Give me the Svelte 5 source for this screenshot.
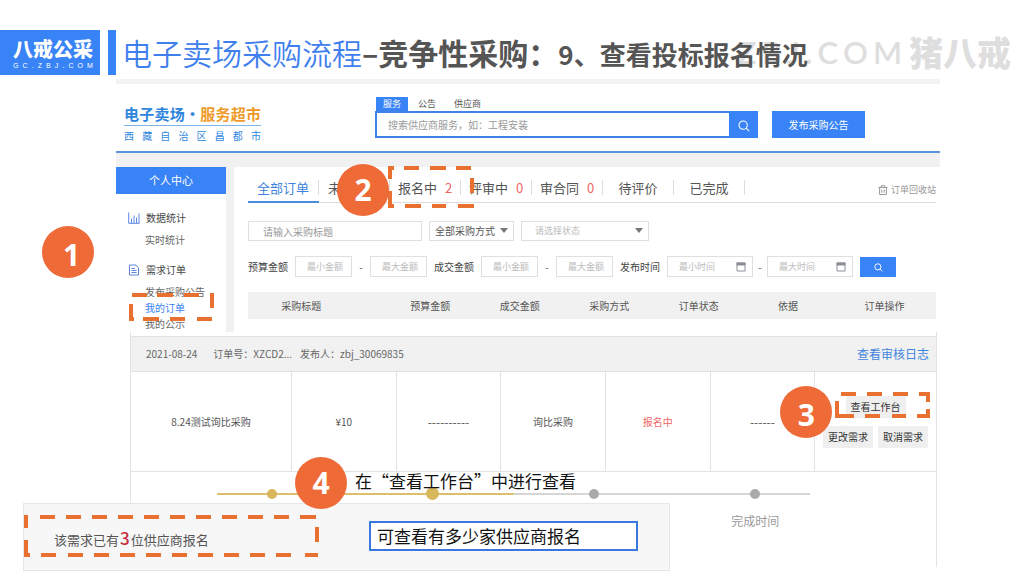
<script>
  const tabs = [
    { name: '全部订单', active: true },
    { name: '未', start: true },
    { name: '报名中', count: 2, marked: true },
    { name: '评审中', count: 0 },
    { name: '审合同', count: 0 },
    { name: '待评价' },
    { name: '已完成' }
  ];
  const columns = ['采购标题', '预算金额', '成交金额', '采购方式', '订单状态', '依据', '订单操作'];
  const steps = [
    { done: true },
    { done: true, current: true },
    {},
    { label: '完成时间' }
  ];
</script>

{#snippet lens()}
  <svg class="lens" viewBox="0 0 14 14" aria-hidden="true">
    <circle cx="6" cy="6" r="4.8" /><path d="M9.5 9.5 13 13" />
  </svg>
{/snippet}

{#snippet marks(cls, d)}
  <svg class="marks {cls}" aria-hidden="true"><path {d} /></svg>
{/snippet}

{#snippet amounts(id, label)}
  <label class="name" for="{id}-min">{label}</label>
  <div class="range">
    <input id="{id}-min" class="field amount" placeholder="最小金额" />
    <span class="dash">-</span>
    <input class="field amount" placeholder="最大金额" aria-label="{label}上限" />
  </div>
{/snippet}

{#snippet date(id, hint)}
  <span class="field date">
    <input {id} placeholder={hint} aria-label={hint} />
    <svg viewBox="0 0 10 10" aria-hidden="true"><path d="M1 1h8v8H1z" /><path class="top" d="M.5 2h9" /></svg>
  </span>
{/snippet}

<div class="slide" lang="zh-CN">
  <header class="heading">
    <div class="logo">
      <strong>八戒公采</strong>
      <span class="spread">{#each 'GC.ZBJ.COM' as c}<span>{c}</span>{/each}</span>
    </div>
    <span class="bar"></span>
    <h1><span class="light">电子卖场采购流程</span>–竞争性采购：<small>9、查看投标报名情况</small></h1>
    <div class="watermark" aria-hidden="true">
      <span class="domain">{#each 'ZBJ.COM' as c}<span>{c}</span>{/each}</span>
      <strong>猪八戒</strong>
    </div>
  </header>

  <section class="site">
    <div class="masthead">
      <div class="brand">
        <div class="market">电子卖场·<em>服务超市</em></div>
        <div class="region">西藏自治区昌都市</div>
      </div>
      <form class="search">
        <div class="kinds">
          <button type="button" class="on">服务</button>
          <button type="button">公告</button>
          <button type="button">供应商</button>
        </div>
        <div class="query">
          <input aria-label="搜索" placeholder="搜索供应商服务，如：工程安装" />
          <button type="button" aria-label="搜索">{@render lens()}</button>
        </div>
      </form>
      <button class="publish">发布采购公告</button>
    </div>

    <div class="workspace">
      <nav class="side">
        <h2>个人中心</h2>
        <h3>
          <svg viewBox="0 0 12 12" aria-hidden="true"><path d="M.7.5v10.8h10.8M3.5 11V6.500M6 11V3.500M8.500 11V5.500M11 11V1.500" /></svg>
          数据统计
        </h3>
        <a class="roomy" href="#stats">实时统计</a>
        <h3 class="second">
          <svg viewBox="0 0 12 12" aria-hidden="true"><path d="M1.500 1h6.500l2.500 2.800V11h-9zM3.500 4.500h3.500M3.500 6.500h5M3.500 8.500h5" /></svg>
          需求订单
        </h3>
        <a href="#publish">发布采购公告</a>
        <a class="current" href="#orders">
          我的订单
          {@render marks('m1', 'M4 4h15M29 4h16M56 4h15M84 2v15M3 13v15M1 28h5M15 28h16M42 28h15M69 28h15')}
        </a>
        <a href="#notices">我的公示</a>
      </nav>

      <main>
        <div class="tabs">
          {#each tabs as t}
            <div class="tab" class:active={t.active} class:start={t.start}>
              <a href="#tab">{t.name}{#if t.count !== undefined}<b>{t.count}</b>{/if}</a>
              {#if t.marked}
                {@render marks('m2', 'M2 4h6M4 2v13M18 4h15M44 4h16M70 4h15M86 14v15M4 27v16M2 42h6M19 42h16M46 42h14M72 42h16')}
                <span class="badge b2">2</span>
              {/if}
            </div>
          {/each}
          <a class="bin" href="#bin">
            <svg viewBox="0 0 10 10" aria-hidden="true"><path d="M.5 2.500h9M3.200 2.300V.7h3.600v1.600M1.600 2.700v6.800h6.800V2.700M3.800 4.500v3.200M6.200 4.500v3.200" /></svg>
            订单回收站
          </a>
        </div>

        <form class="filters">
          <div class="row">
            <input class="field title" aria-label="采购标题" placeholder="请输入采购标题" />
            <span class="field drop method">
              <select aria-label="采购方式"><option>全部采购方式</option></select>
            </span>
            <span class="field drop status">
              <select aria-label="订单状态"><option>请选择状态</option></select>
            </span>
          </div>
          <div class="row second">
            {@render amounts('budget', '预算金额')}
            {@render amounts('deal', '成交金额')}
            <label class="name" for="from">发布时间</label>
            <div class="range dates">
              {@render date('from', '最小时间')}
              <span class="dash">-</span>
              {@render date('to', '最大时间')}
            </div>
            <button class="go" type="button" aria-label="查询">{@render lens()}</button>
          </div>
        </form>

        <table class="columns">
          <thead><tr>{#each columns as c}<th scope="col">{c}</th>{/each}</tr></thead>
        </table>
      </main>
    </div>

    <article class="record">
      <div class="meta">
        <span class="day">2021-08-24</span>
        <span class="number">订单号：XZCD2...</span>
        <span>发布人：zbj_30069835</span>
        <a href="#log">查看审核日志</a>
      </div>
      <table class="order">
        <tbody>
          <tr>
            <td>8.24测试询比采购</td>
            <td>¥10</td>
            <td class="blank">----------</td>
            <td>询比采购</td>
            <td class="red">报名中</td>
            <td class="blank">------</td>
            <td class="ops">
              <button>查看工作台</button>
              <div><button>更改需求</button><button>取消需求</button></div>
              {@render marks('m3', 'M7 4h15M33 4h15M59 4h15M85 4h11M94 4v8M94 19v9M83 26h13M58 26h14M31 26h15M5 26h15M3 11v17')}
              <span class="badge b3">3</span>
            </td>
          </tr>
        </tbody>
      </table>
      <div class="progress">
        <ol>
          {#each steps as s}
            <li>
              <span class="dot" class:done={s.done} class:big={s.current}></span>
              {#if s.label}<span>{s.label}</span>{/if}
            </li>
          {/each}
        </ol>
        <span class="badge b4">4</span>
        <p>在“查看工作台”中进行查看</p>
      </div>
    </article>
  </section>

  <span class="badge b1">1</span>

  <aside class="panel">
    <p>该需求已有<b>3</b>位供应商报名</p>
    <div class="note">可查看有多少家供应商报名</div>
    {@render marks('m4', 'M1 4h4M3 2v13M17 4h15M43 4h15M69 4h15M95 4h15M121 4h15M147 4h15M173 4h15M199 4h15M225 4h15M251 4h15M277 4h15M285 4h8M294 14v15M3 27v15M1 42h6M18 42h15M45 42h15M71 42h15M97 42h15M123 42h15M149 42h15M175 42h15M201 42h15M227 42h15M253 42h15M282 42h13')}
  </aside>
</div>

<style>
  :global(body) { margin: 0; background: #fff; }
  .slide {
    position: relative;
    overflow: hidden;
    padding: 30px 0 8px;
    color: #555;
    font: 10px/16px "Noto Sans CJK SC", "Noto Sans", sans-serif;
  }
  .slide :is(input, select, button) {
    box-sizing: border-box;
    margin: 0;
    padding: 0;
    border: 0;
    border-radius: 0;
    background: none;
    color: inherit;
    font: inherit;
    min-width: 0;
  }
  input::placeholder { color: #999; opacity: 1; }
  a { color: inherit; text-decoration: none; }
  h1, h2, h3, p, ol { margin: 0; padding: 0; font-weight: 400; list-style: none; }
  svg { fill: none; flex: none; }

  .heading { position: relative; display: flex; height: 45px; }
  .logo {
    box-sizing: border-box;
    width: 100px;
    padding: 6px 7px 0 13px;
    background: #3883f6;
    color: #fff;
  }
  .logo strong { display: block; font-size: 20px; line-height: 26px; font-weight: 900; }
  .spread { display: flex; justify-content: space-between; font: 7px/8px "Liberation Sans", sans-serif; }
  .bar { width: 8px; margin: 0 6px 0 8px; background: #3883f6; }
  h1 {
    position: relative;
    z-index: 1;
    color: #555;
    font-size: 30px;
    line-height: 44px;
    font-weight: 700;
    white-space: nowrap;
  }
  h1 .light { color: #3f80ee; font-weight: 350; }
  h1 small { font-size: 26px; }
  .watermark {
    position: absolute;
    top: 0;
    right: 13px;
    display: flex;
    align-items: center;
    gap: 7px;
    height: 44px;
    color: #dedede;
  }
  .domain { display: flex; gap: 5px; font: 600 31px/44px Lato, sans-serif; }
  .watermark strong { font-size: 34px; font-weight: 900; }

  .site { margin: 4px 84px 0 116px; border-top: 5px solid #f3f3f3; }
  .masthead {
    display: flex;
    align-items: flex-end;
    height: 54px;
    padding: 0 75px 13px 8px;
    border-bottom: 2px solid #5b95db;
  }
  .brand { width: 137px; align-self: flex-start; padding-top: 20px; color: #2f86dd; }
  .market {
    padding-bottom: 2px;
    border-bottom: 1px solid #7db4ea;
    font-size: 15px;
    line-height: 19px;
    font-weight: 700;
    text-align-last: justify;
    white-space: nowrap;
  }
  .market em { color: #ee9a28; font-style: normal; }
  .region { padding-top: 3px; line-height: 14px; text-align-last: justify; }
  .search { flex: 1; margin-left: 114px; }
  .kinds { display: flex; padding-left: 1px; font-size: 9px; line-height: 14px; }
  .kinds button { padding: 0 9px; }
  .kinds .on { padding: 0 7px; margin-right: 1px; background: #3883f6; color: #fff; }
  .query { display: flex; height: 27px; }
  .query input { flex: 1; padding: 0 11px; border: 2px solid #3f83e6; border-right: 0; }
  .query button { width: 29px; background: #3883f6; }
  .lens { width: 12px; height: 12px; vertical-align: middle; stroke: #fff; stroke-width: 1.2; }
  .masthead .publish { width: 93px; height: 27px; margin-left: 14px; background: #3883f6; color: #fff; }

  .workspace {
    display: grid;
    grid-template-columns: 110px 1fr;
    gap: 8px;
    border-top: 14px solid #f1f1f1;
    background: linear-gradient(#f1f1f1, #f1f1f1) 110px 0 / 8px 100% no-repeat;
  }
  .side h2 {
    margin-bottom: 14px;
    background: #3883f6;
    color: #fff;
    font-size: 11px;
    line-height: 27px;
    text-align: center;
  }
  .side h3 { display: flex; align-items: center; gap: 6px; padding-left: 12px; color: #444; font-size: 10px; line-height: 20px; }
  .side h3 svg { width: 12px; height: 12px; stroke: #5c86e0; stroke-width: 1; }
  .side h3.second { margin: 8px 0 4px; }
  .side a { position: relative; display: block; padding-left: 29px; color: #666; }
  .side a.roomy { line-height: 24px; }
  .side a.current { color: #3883f6; }

  main { min-width: 0; padding: 0 4px 11px 14px; background: #fff; }
  .tabs { display: flex; height: 35px; border-bottom: 1px solid #dcdcdc; font-size: 13px; white-space: nowrap; }
  .tab { position: relative; flex: 0 0 71px; }
  .tab > a {
    display: flex;
    justify-content: center;
    gap: 8px;
    box-sizing: border-box;
    height: 15px;
    margin-top: 13px;
    border-right: 1px solid #ddd;
    line-height: 15px;
  }
  .tab.start > a { justify-content: flex-start; padding-left: 9px; }
  .tab b { color: #ee6464; font-weight: 400; }
  .tab.active { height: 34px; border-bottom: 2px solid #4a8bdb; color: #3f83dc; }
  .bin { display: flex; align-items: center; gap: 3px; margin: 10px 0 0 auto; color: #999; font-size: 9px; }
  .bin svg { width: 10px; height: 10px; stroke: #999; stroke-width: 1; }

  .row { display: flex; align-items: center; gap: 7px; margin-top: 18px; }
  .row.second { margin: 15px 0; }
  .slide .field { box-sizing: border-box; border: 1px solid #dfdfdf; }
  .slide .title { width: 174px; height: 20px; padding-left: 14px; }
  .drop { position: relative; height: 20px; }
  .drop select { width: 100%; height: 100%; padding-left: 5px; appearance: none; }
  .drop::after {
    content: "";
    position: absolute;
    top: 6px;
    right: 5px;
    border: 4px solid transparent;
    border-top: 5px solid #777;
    border-bottom: 0;
    pointer-events: none;
  }
  .method { width: 85px; }
  .status { width: 128px; }
  .slide .status select { padding-left: 13px; color: #bbb; font-size: 9px; }
  .name { flex: none; color: #444; }
  .range { display: flex; align-items: center; }
  .dash { width: 18px; text-align: center; }
  .dates .dash { width: 14px; }
  .slide .amount { width: 57px; height: 21px; padding-left: 11px; font-size: 9px; }
  .date { display: flex; align-items: center; width: 86px; height: 21px; padding: 0 6px 0 11px; font-size: 9px; }
  .date input { flex: 1; width: 0; }
  .amount::placeholder, .date input::placeholder { color: #bbb; }
  .date svg { width: 10px; height: 10px; stroke: #8a8f98; stroke-width: 1; }
  .date svg .top { stroke-width: 3; }
  .slide .go { width: 36px; height: 20px; background: #3883f6; line-height: 10px; }
  .go .lens { width: 9px; height: 9px; stroke-width: 1.500; }

  table { width: 100%; border-spacing: 0; table-layout: fixed; }
  .columns { background: #f1f1f1; }
  .columns th { width: 13%; height: 27px; padding: 0; font-weight: 400; }
  .columns th:first-child { width: 15.500%; padding-right: 31px; }
  .columns th:last-child { width: 15%; }

  .record { margin: 0 3px 0 14px; padding-top: 4px; border: solid #e2e2e2; border-width: 0 1px; }
  .meta {
    display: flex;
    align-items: center;
    height: 34px;
    padding: 0 7px 0 15px;
    border: solid #e0e0e0;
    border-width: 1px 0;
    background: #f1f1f1;
    color: #666;
  }
  .day { margin-right: 16px; }
  .number { margin-right: 8px; }
  .meta a { margin-left: auto; color: #4384dd; font-size: 12px; }
  .order td {
    width: 13%;
    height: 100px;
    box-sizing: border-box;
    padding: 0;
    border: solid #e2e2e2;
    border-width: 0 1px 1px 0;
    text-align: center;
  }
  .order td:first-child { width: 20%; }
  .order td:last-child { position: relative; width: 15%; border-right: 0; }
  .order .red { color: #e66; }
  .order .blank { font-size: 12px; }
  .ops button { height: 22px; padding: 0 5px; background: #efefef; color: #333; }
  .ops div { display: flex; justify-content: center; gap: 5px; margin-top: 8px; }

  .progress { position: relative; min-height: 95px; }
  .progress ol {
    display: grid;
    grid-template-columns: repeat(4, 1fr);
    margin: 0 100px 0 60px;
    padding-top: 14px;
    background: linear-gradient(90deg, #dcbf68 50%, #d5d5d5 50%) 50% 21px / 92% 2px no-repeat;
    color: #999;
    font-size: 12px;
    text-align: center;
  }
  .progress li { display: grid; grid-template-rows: 15px auto; gap: 12px; place-items: center; }
  .dot { width: 10px; height: 10px; border-radius: 50%; background: #aaa; }
  .dot.done { background: #d7b65c; }
  .dot.big { width: 13px; height: 13px; }
  .progress p { position: absolute; top: -4px; left: 224px; color: #111; font-size: 17px; line-height: 25px; white-space: nowrap; }

  .panel {
    position: absolute;
    left: 23px;
    bottom: 4px;
    display: flex;
    align-items: center;
    box-sizing: border-box;
    width: 647px;
    height: 68px;
    padding-left: 30px;
    border: 1px solid #e6e6e6;
    background: #f7f7f7;
  }
  .panel p { flex: 1; padding-top: 4px; font-size: 13px; line-height: 20px; }
  .panel b { margin: 0 1px; color: #c3303c; font-size: 17px; font-weight: 500; }
  .note {
    box-sizing: border-box;
    width: 269px;
    margin: 0 31px 2px 0;
    padding-left: 6px;
    border: 2px solid #3b76e0;
    background: #fff;
    color: #111;
    font-size: 17px;
    line-height: 26px;
  }

  .badge {
    position: absolute;
    z-index: 3;
    width: 52px;
    height: 52px;
    border-radius: 50%;
    background: #ee6a37;
    color: #fff;
    font: 700 30px/52px "Open Sans", sans-serif;
    text-align: center;
  }
  .b1 { top: 226px; left: 42px; box-sizing: border-box; padding: 3px 0 0 7px; }
  .b2 { top: -3px; left: -53px; }
  .b3 { top: 14px; left: -35px; box-sizing: border-box; padding-top: 3px; }
  .b4 { top: -15px; left: 164px; }
  .marks { position: absolute; z-index: 2; overflow: visible; pointer-events: none; stroke: #e87030; stroke-width: 4; }
  .m1 { top: -9px; left: 12px; width: 88px; height: 30px; }
  .m2 { top: -3px; left: -4px; width: 90px; height: 46px; }
  .m3 { top: 18px; left: 19px; width: 98px; height: 30px; }
  .m4 { top: 9px; left: -1px; width: 298px; height: 46px; }
</style>
